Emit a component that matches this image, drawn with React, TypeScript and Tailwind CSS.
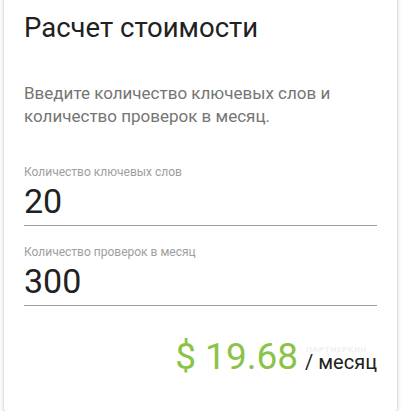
import React from "react";

function Field({ label, value }: { label: string; value: string }) {
  return (
    <div className="flex flex-col">
      <label className="text-[12px] leading-[16px] text-[#9e9e9e]">{label}</label>
      <div className="mt-[1px] border-b border-[#9e9e9e] pb-[4px] text-[34px] leading-[40px] text-[#212121]">
        {value}
      </div>
    </div>
  );
}

export default function App() {
  return (
    <div className="min-h-screen bg-white font-['Roboto',sans-serif]">
      <div className="ml-[4px] mt-[-10px] w-[393px] rounded-[2px] bg-white px-[20px] pt-[22px] pb-[32px] shadow-[0_2px_2px_0_rgba(0,0,0,0.14),0_3px_1px_-2px_rgba(0,0,0,0.12),0_1px_5px_0_rgba(0,0,0,0.2)]">
        <h2 className="text-[27.5px] leading-[32px] text-[#212121]">Расчет стоимости</h2>

        <p className="mt-[38px] text-[17px] leading-[23px] text-[#757575]">
          Введите количество ключевых слов и количество проверок в месяц.
        </p>

        <div className="mt-[36px] flex flex-col gap-[18px]">
          <Field label="Количество ключевых слов" value="20" />
          <Field label="Количество проверок в месяц" value="300" />
        </div>

        <div className="relative mt-[29px] flex h-[44px] items-baseline justify-end">
          <span className="text-[37px] leading-[44px] text-[#8bc34a]">$ 19.68</span>
          <span className="ml-[7px] text-[20px] leading-[16px] text-[#212121]">/ месяц</span>
          <span className="absolute right-[10px] top-[11px] text-[8px] font-bold leading-[8px] tracking-[0.8px] text-[#f0f0f0]">
            ПАРТНЕРКИН
          </span>
        </div>
      </div>
    </div>
  );
}
